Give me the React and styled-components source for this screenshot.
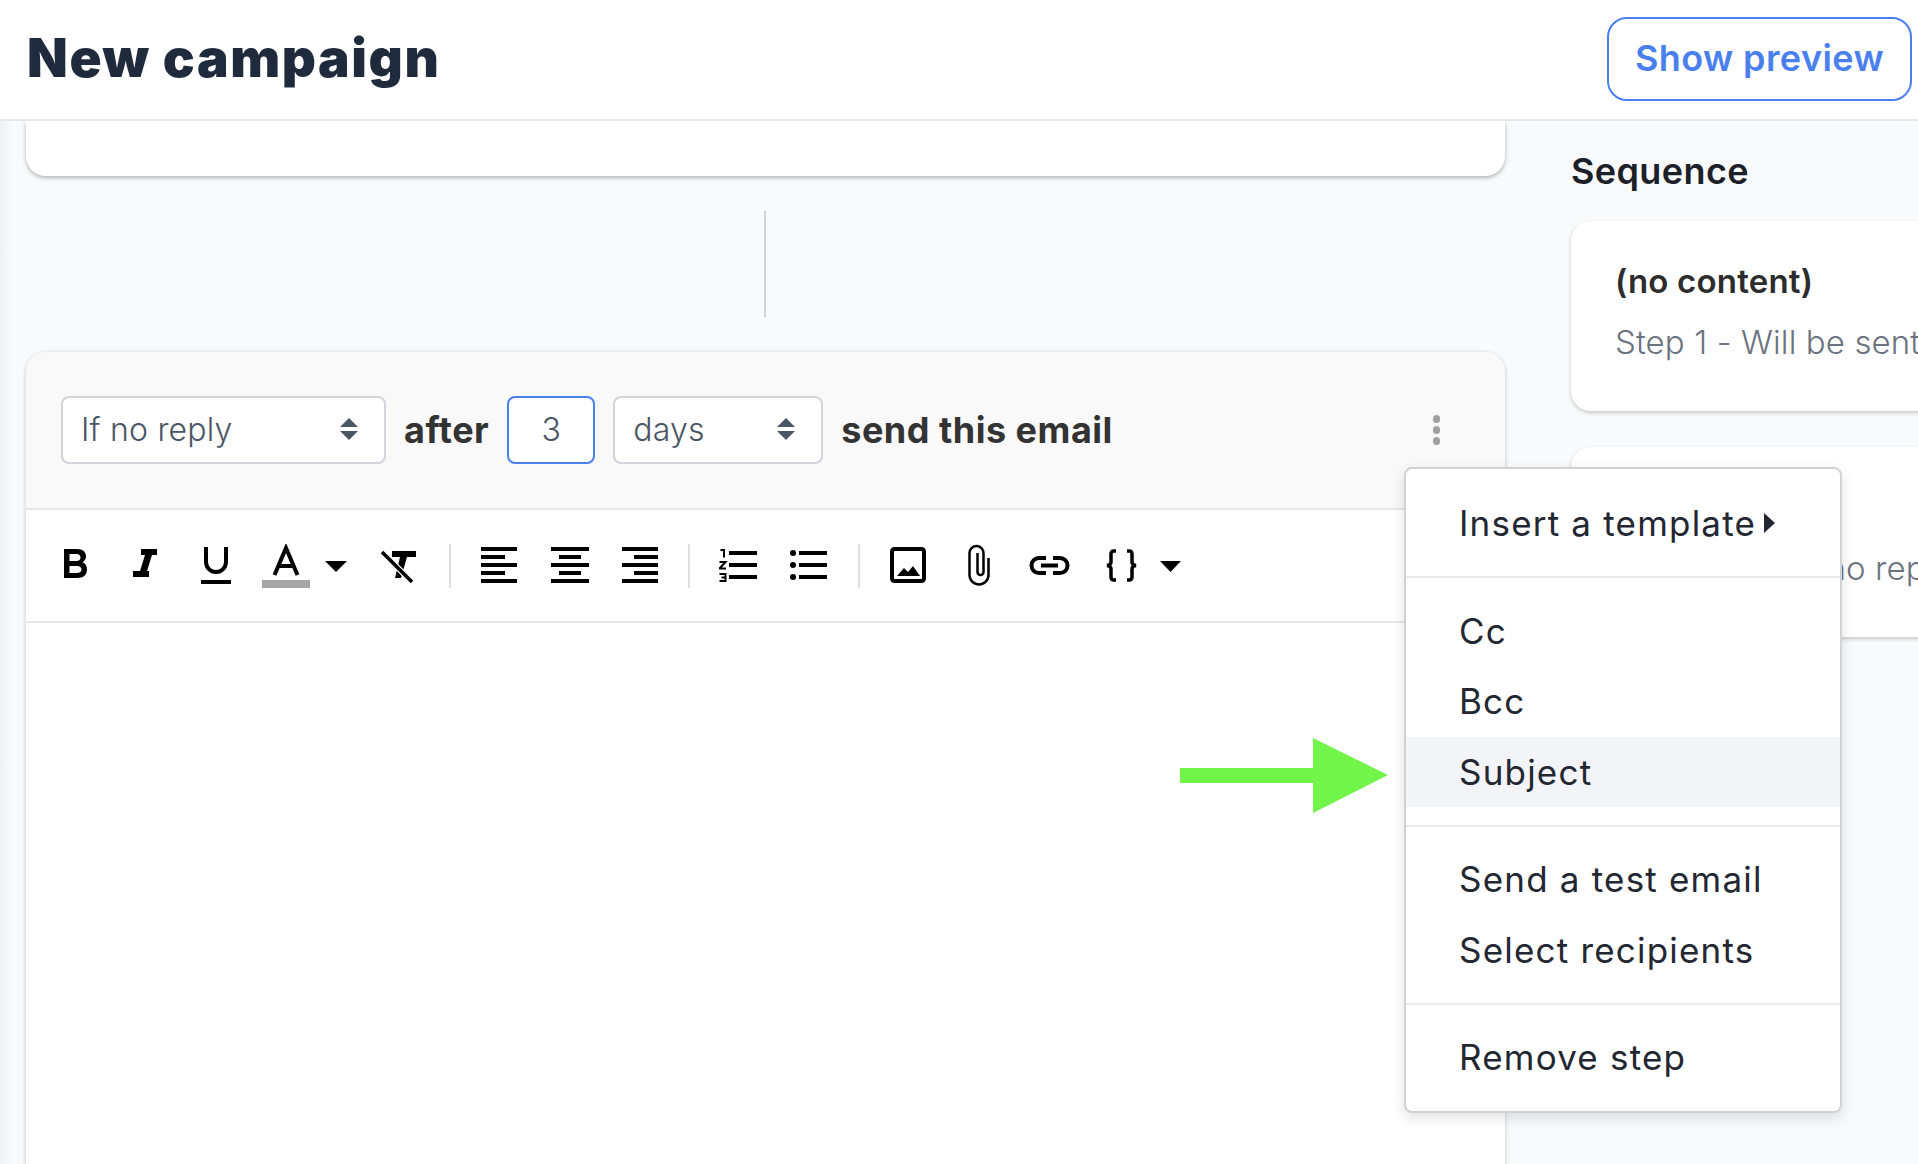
import React from 'react';
import styled, { createGlobalStyle } from 'styled-components';

const GlobalStyle = createGlobalStyle`
  html, body {
    margin: 0;
    padding: 0;
    background: #f9fafb;
  }
  * {
    box-sizing: border-box;
  }
`;

const Page = styled.div`
  width: 1918px;
  height: 1164px;
  overflow: hidden;
  display: flex;
  flex-direction: column;
  font-family: Inter, "Noto Sans", sans-serif;
  background: linear-gradient(to right, #f0f1f5, #f9fafb 12px);
`;

const Header = styled.header`
  height: 121px;
  flex: none;
  display: flex;
  align-items: center;
  justify-content: space-between;
  padding: 0 6px 2px 27px;
  background: #fff;
  border-bottom: 2px solid #e8e8e8;
  position: relative;
  z-index: 2;
`;

const Title = styled.h1`
  margin: 0 0 2px;
  font-size: 53px;
  font-weight: 900;
  letter-spacing: 1.6px;
  color: #1f2a3c;
`;

const PreviewButton = styled.button`
  width: 305px;
  height: 84px;
  padding: 0 0 2px;
  background: #fff;
  border: 2px solid #4a80ee;
  border-radius: 20px;
  color: #4a80ee;
  font-family: inherit;
  font-size: 36px;
  font-weight: 600;
  letter-spacing: 0.4px;
`;

const Main = styled.main`
  flex: 1;
  display: flex;
  padding-left: 26px;
  min-height: 0;
`;

const EditorColumn = styled.div`
  width: 1479px;
  flex: none;
  display: flex;
  flex-direction: column;
  align-items: center;
`;

const PreviousCard = styled.div`
  width: 100%;
  height: 55px;
  flex: none;
  background: #fff;
  border-radius: 0 0 20px 20px;
  box-shadow: 0 2px 4px rgba(0, 0, 0, 0.28);
`;

const Connector = styled.div`
  width: 2px;
  height: 106px;
  flex: none;
  margin: 35px 2px 35px 0;
  background: #d1d3d8;
`;

const StepCard = styled.section`
  position: relative;
  width: 100%;
  flex: none;
  height: 900px;
  background: #fff;
  border-radius: 20px;
  box-shadow: 0 1px 4px rgba(0, 0, 0, 0.22);
`;

const StepHeader = styled.div`
  height: 158px;
  display: flex;
  align-items: center;
  gap: 18px;
  padding: 0 65px 0 35px;
  background: #f9f9f9;
  border-bottom: 2px solid #e6e6eb;
  border-radius: 20px 20px 0 0;
`;

const SelectBox = styled.div`
  width: ${({ $width }) => $width}px;
  height: 68px;
  display: flex;
  align-items: center;
  justify-content: space-between;
  padding: 0 26px 2px 18px;
  background: #fff;
  border: 2px solid #d1d5db;
  border-radius: 8px;
  color: #4b5563;
  font-size: 32px;
  font-weight: 300;
  letter-spacing: 0.2px;
`;

const DelayInput = styled.div`
  width: 88px;
  height: 68px;
  display: flex;
  align-items: center;
  justify-content: center;
  padding-bottom: 2px;
  background: #fff;
  border: 2px solid #4a80ee;
  border-radius: 8px;
  color: #4b5563;
  font-size: 32px;
  font-weight: 300;
`;

const StepLabel = styled.span`
  color: #333;
  font-size: 36px;
  font-weight: 700;
  letter-spacing: 0.5px;
  white-space: nowrap;
`;

const KebabButton = styled.div`
  margin-left: auto;
  display: flex;
  flex-direction: column;
  gap: 3.5px;
`;

const KebabDot = styled.span`
  width: 7.5px;
  height: 7.5px;
  border-radius: 50%;
  background: #a0a0a0;
`;

const Toolbar = styled.div`
  height: 113px;
  display: flex;
  align-items: center;
  padding-left: 38px;
  border-bottom: 2px solid #e6e6eb;
`;

const ToolIcon = styled.svg`
  flex: none;
  height: 44px;
  margin-left: ${({ $gap }) => $gap || 0}px;
`;

const Separator = styled.span`
  flex: none;
  width: 2px;
  height: 44px;
  margin-left: ${({ $gap }) => $gap}px;
  background: #dddde3;
`;

const Menu = styled.div`
  position: absolute;
  left: 1378px;
  top: 115px;
  width: 438px;
  padding: 19px 0 18px;
  background: #fff;
  border: 2px solid #d2d2d2;
  border-radius: 8px;
  box-shadow: 0 5px 14px rgba(0, 0, 0, 0.12);
  z-index: 5;
`;

const MenuItem = styled.div`
  height: 70.5px;
  display: flex;
  align-items: center;
  padding-left: 53px;
  color: #222732;
  font-size: 35px;
  font-weight: 400;
  letter-spacing: 1.2px;
  background: ${({ $active }) => ($active ? '#f3f4f8' : 'transparent')};
`;

const MenuDivider = styled.div`
  height: 2px;
  margin: 17.5px 0;
  background: #e9eaee;
`;

const SubmenuCaret = styled.svg`
  width: 11px;
  height: 22px;
  margin-left: 8px;
`;

const ArrowMark = styled.svg`
  position: absolute;
  left: 1154px;
  top: 386px;
  width: 208px;
  height: 76px;
`;

const SequenceColumn = styled.aside`
  flex: none;
  width: 500px;
  margin-left: 66px;
  padding-top: 30px;
`;

const SequenceTitle = styled.h2`
  margin: 0 0 30px;
  height: 40px;
  line-height: 40px;
  color: #1c2029;
  font-size: 36px;
  font-weight: 600;
  letter-spacing: 0.4px;
`;

const SequenceCard = styled.div`
  height: 190px;
  margin-bottom: 36px;
  padding: 37px 0 0 44px;
  background: #fff;
  border-radius: 20px;
  box-shadow: 0 2px 4px rgba(0, 0, 0, 0.2);
  white-space: nowrap;
  overflow: hidden;
`;

const SequenceName = styled.div`
  height: 46px;
  line-height: 46px;
  color: #2d2d2d;
  font-size: 33px;
  font-weight: 600;
  letter-spacing: 0.2px;
`;

const SequenceMeta = styled.div`
  margin-top: 15px;
  line-height: 46px;
  color: #6b7280;
  font-size: 33px;
  font-weight: 300;
  letter-spacing: 0.1px;
`;

function SelectArrows() {
  return (
    <svg width="18" height="24" viewBox="0 0 18 24" fill="#4b5563">
      <path d="M9 1 L18 10 H0 Z" />
      <path d="M0 14 H18 L9 23 Z" />
    </svg>
  );
}

function Caret({ gap, width = 22 }) {
  return (
    <ToolIcon $gap={gap} width={width} viewBox={`0 0 ${width} 44`}>
      <path d={`M0 17 H${width} L${width / 2} 28 Z`} />
    </ToolIcon>
  );
}

function AlignIcon({ gap, width, shortX, shortW }) {
  return (
    <ToolIcon $gap={gap} width={width} viewBox={`0 0 ${width} 44`}>
      <rect y="3" width={width} height="4" />
      <rect x={shortX} y="11" width={shortW} height="4" />
      <rect y="19" width={width} height="4" />
      <rect x={shortX} y="27" width={shortW} height="4" />
      <rect y="35" width={width} height="4" />
    </ToolIcon>
  );
}

function EditorToolbar() {
  return (
    <Toolbar>
      <ToolIcon width="23" viewBox="0 0 23 44" fillRule="evenodd">
        <path d="M0 5 H13 C19 5 22 8 22 12.5 C22 15 20.5 17 18.5 18.2 C21.5 19.2 23 22 23 25.5 C23 30.5 19.5 34 13.5 34 H0 Z M5.5 10 V17 H12.5 C15 17 16.5 15.5 16.5 13.5 C16.5 11.5 15 10 12.5 10 Z M5.5 22 V29 H13 C15.8 29 17.5 27.5 17.5 25.5 C17.5 23.5 15.8 22 13 22 Z" />
      </ToolIcon>
      <ToolIcon $gap={46} width="24" viewBox="0 0 24 44">
        <path d="M8 5 H24 V11 H19 L14 27 H16 V33 H0 V27 H7 L12 11 H8 Z" />
      </ToolIcon>
      <ToolIcon $gap={44} width="30" viewBox="0 0 30 44">
        <path d="M5 3 V18 A10 10 0 0 0 25 18 V3" fill="none" stroke="#000" strokeWidth="4" />
        <rect y="36" width="30" height="4" />
      </ToolIcon>
      <ToolIcon $gap={31} width="48" viewBox="0 0 48 44">
        <path d="M12.5 31 L24 4 L35.5 31 M16.5 22 H31.5" fill="none" stroke="#000" strokeWidth="4" />
        <rect y="36" width="48" height="9" fill="#a6a6a6" />
      </ToolIcon>
      <Caret gap={15} />
      <ToolIcon $gap={33} width="36" viewBox="0 0 36 44">
        <path d="M12 7 H36 V13 H27 L21 34 H15 L20 13 H12 Z" />
        <path d="M2 8 L32 38" stroke="#fff" strokeWidth="6" />
        <path d="M2 8 L32 38" stroke="#000" strokeWidth="3.5" />
      </ToolIcon>
      <Separator $gap={33} />
      <AlignIcon gap={30} width={36} shortX={0} shortW={24} />
      <AlignIcon gap={34} width={38} shortX={8} shortW={22} />
      <AlignIcon gap={33} width={36} shortX={12} shortW={24} />
      <Separator $gap={30} />
      <ToolIcon $gap={29} width="38" viewBox="0 0 38 44">
        <rect x="10" y="7" width="28" height="4" />
        <rect x="10" y="19" width="28" height="4" />
        <rect x="10" y="31" width="28" height="4" />
        <path d="M1.5 6 H5 V13.5 M0.5 18 H6.5 L0.5 24.5 H7 M0.5 30 H6.5 V37 H0.5 M2.5 33.5 H6.5" fill="none" stroke="#000" strokeWidth="2" />
      </ToolIcon>
      <ToolIcon $gap={33} width="37" viewBox="0 0 37 44">
        <circle cx="3" cy="9" r="3" />
        <circle cx="3" cy="21" r="3" />
        <circle cx="3" cy="33" r="3" />
        <rect x="9" y="7" width="28" height="4" />
        <rect x="9" y="19" width="28" height="4" />
        <rect x="9" y="31" width="28" height="4" />
      </ToolIcon>
      <Separator $gap={31} />
      <ToolIcon $gap={30} width="36" viewBox="0 0 36 44">
        <rect x="2" y="5" width="32" height="32" rx="2.5" fill="none" stroke="#000" strokeWidth="4" />
        <path d="M7 32 L14 24 L18 28 L23 22 L30 32 Z" />
      </ToolIcon>
      <ToolIcon $gap={42} width="22" viewBox="0 0 22 44">
        <path d="M20.5 14 V31 A9.5 9.5 0 0 1 1.5 31 V9 A7 7 0 0 1 15.5 9 V28 A3 3 0 0 1 9.5 28 V9" fill="none" stroke="#000" strokeWidth="2.5" />
      </ToolIcon>
      <ToolIcon $gap={39} width="41" viewBox="0 0 41 44">
        <path d="M17 14 H10 A7.5 7.5 0 0 0 10 29 H17 M24 14 H31 A7.5 7.5 0 0 1 31 29 H24 M12 21.5 H29" fill="none" stroke="#000" strokeWidth="4" />
      </ToolIcon>
      <ToolIcon $gap={34} width="35" viewBox="0 0 35 44">
        <path d="M12 7 H10 Q7 7 7 10 V18 Q7 21 3 21.5 Q7 22 7 25 V33 Q7 36 10 36 H12 M23 7 H25 Q28 7 28 10 V18 Q28 21 32 21.5 Q28 22 28 25 V33 Q28 36 25 36 H23" fill="none" stroke="#000" strokeWidth="3.5" />
      </ToolIcon>
      <Caret gap={21} width={21} />
    </Toolbar>
  );
}

function StepMenu() {
  return (
    <Menu>
      <MenuItem>
        Insert a template
        <SubmenuCaret viewBox="0 0 11 22">
          <path d="M0 1 L11 11 L0 21 Z" fill="#222732" />
        </SubmenuCaret>
      </MenuItem>
      <MenuDivider />
      <MenuItem>Cc</MenuItem>
      <MenuItem>Bcc</MenuItem>
      <MenuItem $active>Subject</MenuItem>
      <MenuDivider />
      <MenuItem>Send a test email</MenuItem>
      <MenuItem>Select recipients</MenuItem>
      <MenuDivider />
      <MenuItem>Remove step</MenuItem>
    </Menu>
  );
}

export default function App() {
  return (
    <Page>
      <GlobalStyle />
      <Header>
        <Title>New campaign</Title>
        <PreviewButton>Show preview</PreviewButton>
      </Header>
      <Main>
        <EditorColumn>
          <PreviousCard />
          <Connector />
          <StepCard>
            <StepHeader>
              <SelectBox $width={325}>
                If no reply
                <SelectArrows />
              </SelectBox>
              <StepLabel>after</StepLabel>
              <DelayInput>3</DelayInput>
              <SelectBox $width={210}>
                days
                <SelectArrows />
              </SelectBox>
              <StepLabel>send this email</StepLabel>
              <KebabButton>
                <KebabDot />
                <KebabDot />
                <KebabDot />
              </KebabButton>
            </StepHeader>
            <EditorToolbar />
            <ArrowMark viewBox="0 0 208 76">
              <path d="M0 30 H133 V0 L208 37 L133 75 V45 H0 Z" fill="#72f54a" />
            </ArrowMark>
            <StepMenu />
          </StepCard>
        </EditorColumn>
        <SequenceColumn>
          <SequenceTitle>Sequence</SequenceTitle>
          <SequenceCard>
            <SequenceName>(no content)</SequenceName>
            <SequenceMeta>Step 1 - Will be sent first</SequenceMeta>
          </SequenceCard>
          <SequenceCard>
            <SequenceName>(no content)</SequenceName>
            <SequenceMeta>Step 2 - 3d if no reply</SequenceMeta>
          </SequenceCard>
        </SequenceColumn>
      </Main>
    </Page>
  );
}
